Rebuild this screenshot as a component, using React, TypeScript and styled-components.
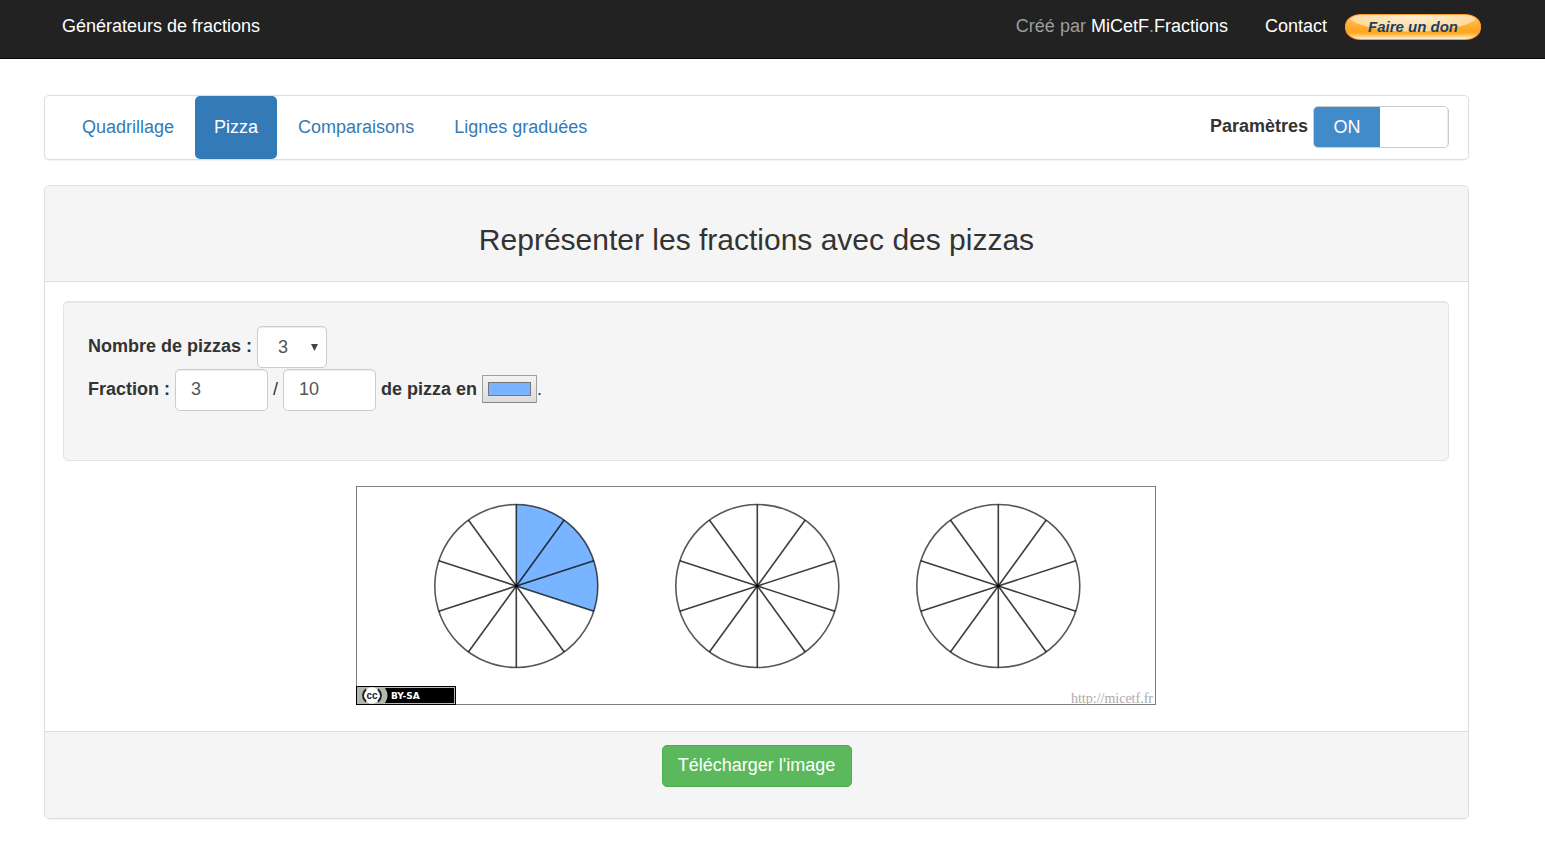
import React, { useState } from "react";
import styled, { createGlobalStyle } from "styled-components";

const GlobalStyle = createGlobalStyle`
  *, *::before, *::after { box-sizing: border-box; }
  body {
    margin: 0;
    background: #fff;
    color: #333;
    font-family: "Liberation Sans", Arial, Helvetica, sans-serif;
    font-size: 18px;
    line-height: 26px;
  }
  button, input, select { font: inherit; margin: 0; }
`;

const Header = styled.header`
  display: flex;
  justify-content: space-between;
  align-items: flex-start;
  padding: 13px 64px 18px 62px;
  background: #222;
  border-bottom: 1px solid #080808;
`;

const HeaderSide = styled.div`
  display: flex;
  align-items: flex-start;
`;

const HeaderLink = styled.a`
  display: inline-block;
  color: #fff;
  text-decoration: none;
`;

const Credit = styled.span`
  margin-right: 37px;
  color: #9d9d9d;
`;

const DonateButton = styled.button`
  width: 136px;
  height: 26px;
  margin: 1px 0 0 18px;
  padding: 0;
  border: 1px solid #ff9933;
  border-radius: 16px / 12px;
  background:
    radial-gradient(ellipse 66px 17px at 50% 0, rgba(255, 246, 228, 0.9) 0, rgba(255, 222, 165, 0.9) 96%, transparent 100%),
    linear-gradient(#ffc46a 0, #ffa822 60%, #ffa822 74%, #ffc86e 86%, #fff0d4 100%);
  color: #1c3f66;
  font-size: 15px;
  font-style: italic;
  font-weight: bold;
  line-height: 24px;
`;

const Page = styled.main`
  display: flex;
  flex-direction: column;
  gap: 25px;
  padding: 36px 76px 48px 44px;
`;

const Panel = styled.section`
  border: 1px solid #ddd;
  border-radius: 5px;
  background: #fff;
  box-shadow: 0 1px 1px rgba(0, 0, 0, 0.05);
`;

const NavPanel = styled(Panel)`
  display: flex;
  justify-content: space-between;
  padding: 0 19px 0 18px;
`;

const Tabs = styled.nav`
  display: flex;
  gap: 2px;
`;

const Tab = styled.a<{ $active?: boolean }>`
  padding: 18px 19px 19px;
  border-radius: 5px;
  background: ${(p) => (p.$active ? "#337ab7" : "transparent")};
  color: ${(p) => (p.$active ? "#fff" : "#337ab7")};
  text-decoration: none;
`;

const Setting = styled.label`
  display: flex;
  align-items: flex-start;
  gap: 5px;
  padding-top: 10px;
  font-weight: bold;
`;

const SettingName = styled.span`
  padding-top: 7px;
`;

const HiddenCheckbox = styled.input`
  position: absolute;
  opacity: 0;
  pointer-events: none;
`;

const Switch = styled.span<{ $on: boolean }>`
  display: flex;
  flex-direction: ${(p) => (p.$on ? "row" : "row-reverse")};
  width: 136px;
  height: 42px;
  overflow: hidden;
  border: 1px solid #ccc;
  border-radius: 5px;
  background: #eee;
  font-weight: normal;
  line-height: 40px;
  text-align: center;
`;

const SwitchState = styled.span<{ $on: boolean }>`
  width: 66px;
  background: ${(p) => (p.$on ? "#428bca" : "#eee")};
  color: ${(p) => (p.$on ? "#fff" : "#333")};
`;

const SwitchHandle = styled.span`
  width: 67px;
  background: #fff;
`;

const PanelHeading = styled.header`
  padding: 36px 18px 23px;
  border-bottom: 1px solid #ddd;
  border-radius: 4px 4px 0 0;
  background: #f5f5f5;
  text-align: center;
`;

const Title = styled.h1`
  margin: 0;
  font-size: 30px;
  font-weight: normal;
  line-height: 36px;
`;

const PanelBody = styled.div`
  display: flex;
  flex-direction: column;
  gap: 25px;
  padding: 19px 19px 26px 18px;
`;

const Well = styled.form`
  display: flex;
  flex-direction: column;
  gap: 1px;
  min-height: 160px;
  padding: 24px;
  border: 1px solid #e3e3e3;
  border-radius: 5px;
  background: #f5f5f5;
  box-shadow: inset 0 1px 1px rgba(0, 0, 0, 0.05);
`;

const FormRow = styled.div`
  display: flex;
  align-items: center;
  gap: 5px;
  line-height: 40px;
`;

const FieldLabel = styled.label`
  padding-bottom: 2px;
  font-weight: bold;
`;

const Slash = styled.span`
  padding-bottom: 2px;
`;

const Field = styled.input`
  width: 93px;
  height: 42px;
  padding: 0 15px 2px;
  border: 1px solid #ccc;
  border-radius: 5px;
  background: #fff;
  box-shadow: inset 0 1px 1px rgba(0, 0, 0, 0.075);
  color: #555;
`;

const SelectWrap = styled.span`
  position: relative;
  display: flex;
`;

const Select = styled.select`
  width: 70px;
  height: 42px;
  padding: 0 20px 3px;
  appearance: none;
  border: 1px solid #ccc;
  border-radius: 5px;
  background: #fff;
  box-shadow: inset 0 1px 1px rgba(0, 0, 0, 0.075);
  color: #555;
`;

const SelectArrow = styled.svg`
  position: absolute;
  top: 18px;
  right: 9px;
  pointer-events: none;
`;

const ColorGroup = styled.span`
  display: flex;
  align-items: center;
  padding-bottom: 2px;
`;

const ColorInput = styled.input`
  width: 55px;
  height: 28px;
  padding: 0 5px;
  appearance: none;
  border: 1px solid #a0a0a0;
  border-bottom-color: #888;
  border-radius: 1px;
  background: linear-gradient(#f3f3f3, #dcdcdc);

  &::-webkit-color-swatch-wrapper { padding: 6px 0; }
  &::-webkit-color-swatch { border: 1px solid #777; border-radius: 0; }
`;

const Drawing = styled.svg`
  display: block;
  align-self: center;
  width: 800px;
  max-width: 100%;
  height: auto;
`;

const PanelFooter = styled.footer`
  display: flex;
  justify-content: center;
  padding: 13px 18px 31px;
  border-top: 1px solid #ddd;
  border-radius: 0 0 4px 4px;
  background: #f5f5f5;
`;

const DownloadButton = styled.button`
  min-width: 190px;
  height: 42px;
  padding: 0 15px 2px;
  border: 1px solid #4cae4c;
  border-radius: 5px;
  background: #5cb85c;
  color: #fff;
`;

const RADIUS = 81.5;

function Pizza({ cx, cy, parts, filled, color }: {
  cx: number; cy: number; parts: number; filled: number; color: string;
}) {
  const angles = Array.from({ length: parts }, (_, i) => (i * 2 * Math.PI) / parts);
  const point = (t: number) => `${cx + RADIUS * Math.sin(t)} ${cy - RADIUS * Math.cos(t)}`;
  return (
    <g strokeWidth="1.600">
      {angles.map((a, i) => (
        <path
          key={i}
          d={`M${cx} ${cy}L${point(a)}A${RADIUS} ${RADIUS} 0 0 1 ${point(a + (2 * Math.PI) / parts)}Z`}
          fill={i < filled ? color : "#fff"}
        />
      ))}
      <circle cx={cx} cy={cy} r={RADIUS} fill="none" stroke="#000" strokeOpacity="0.66" />
      {angles.map((a, i) => (
        <path key={i} d={`M${cx} ${cy}L${point(a)}`} stroke="#000" strokeOpacity="0.76" />
      ))}
    </g>
  );
}

function LicenseBadge() {
  return (
    <g transform="translate(0 200)">
      <rect width="100" height="19" fill="#000" />
      <rect x="1.5" y="1.5" width="97" height="16" fill="#000" stroke="#b2b8ae" />
      <path d="M2 2H29Q34 9.500 29 17H2Z" fill="#b2b8ae" />
      <circle cx="16" cy="9.500" r="8.200" fill="#fff" />
      <path d="M10 3.200Q4 9.500 10 15.800M22 3.200Q28 9.500 22 15.800" fill="none" stroke="#222" strokeWidth="2" />
      <text x="16" y="13" textAnchor="middle" fontFamily="Liberation Sans, sans-serif" fontWeight="bold" fontSize="10" fill="#222">cc</text>
      <text x="35" y="13" fontFamily="DejaVu Sans, sans-serif" fontWeight="bold" fontSize="9" fill="#fff">
        BY-SA
      </text>
    </g>
  );
}

export default function App() {
  const [settings, setSettings] = useState(true);
  const [count, setCount] = useState(3);
  const [numerator, setNumerator] = useState("3");
  const [denominator, setDenominator] = useState("10");
  const [color, setColor] = useState("#78b4ff");

  const parts = Math.max(2, Number(denominator) || 2);
  const total = Number(numerator) || 0;

  return (
    <>
      <GlobalStyle />
      <Header>
        <HeaderLink href="#">Générateurs de fractions</HeaderLink>
        <HeaderSide>
          <Credit>
            Créé par <HeaderLink href="#">MiCetF</HeaderLink>.<HeaderLink href="#">Fractions</HeaderLink>
          </Credit>
          <HeaderLink href="#">Contact</HeaderLink>
          <DonateButton type="button">Faire un don</DonateButton>
        </HeaderSide>
      </Header>
      <Page>
        <NavPanel>
          <Tabs>
            <Tab href="#">Quadrillage</Tab>
            <Tab href="#" $active aria-current="page">Pizza</Tab>
            <Tab href="#">Comparaisons</Tab>
            <Tab href="#">Lignes graduées</Tab>
          </Tabs>
          <Setting>
            <SettingName>Paramètres</SettingName>
            <HiddenCheckbox type="checkbox" checked={settings} onChange={(e) => setSettings(e.target.checked)} />
            <Switch $on={settings}>
              <SwitchState $on={settings}>{settings ? "ON" : "OFF"}</SwitchState>
              <SwitchHandle />
            </Switch>
          </Setting>
        </NavPanel>
        <Panel>
          <PanelHeading>
            <Title>Représenter les fractions avec des pizzas</Title>
          </PanelHeading>
          <PanelBody>
            {settings && (
              <Well>
                <FormRow>
                  <FieldLabel htmlFor="count">Nombre de pizzas :</FieldLabel>
                  <SelectWrap>
                    <Select id="count" value={count} onChange={(e) => setCount(Number(e.target.value))}>
                      <option>1</option>
                      <option>2</option>
                      <option>3</option>
                    </Select>
                    <SelectArrow width="7" height="7" viewBox="0 0 7 7" aria-hidden="true">
                      <path d="M0 0H7L3.500 7Z" fill="#444" />
                    </SelectArrow>
                  </SelectWrap>
                </FormRow>
                <FormRow>
                  <FieldLabel htmlFor="numerator">Fraction :</FieldLabel>
                  <Field id="numerator" value={numerator} onChange={(e) => setNumerator(e.target.value)} />
                  <Slash>/</Slash>
                  <Field aria-label="Dénominateur" value={denominator} onChange={(e) => setDenominator(e.target.value)} />
                  <FieldLabel htmlFor="color">de pizza en</FieldLabel>
                  <ColorGroup>
                    <ColorInput id="color" type="color" value={color} onChange={(e) => setColor(e.target.value)} />
                    <span>.</span>
                  </ColorGroup>
                </FormRow>
              </Well>
            )}
            <Drawing viewBox="0 0 800 219" role="img" aria-label="Pizzas">
              <rect x="0.500" y="0.500" width="799" height="218" fill="#fff" stroke="#808080" />
              {Array.from({ length: count }, (_, i) => (
                <Pizza
                  key={i}
                  cx={160.3 + i * 241}
                  cy={100}
                  parts={parts}
                  filled={Math.min(parts, Math.max(0, total - i * parts))}
                  color={color}
                />
              ))}
              <LicenseBadge />
              <text x="797" y="217" textAnchor="end" fontFamily="Liberation Serif, serif" fontSize="14" fill="#aaa">
                http://micetf.fr
              </text>
            </Drawing>
          </PanelBody>
          <PanelFooter>
            <DownloadButton type="button">Télécharger l'image</DownloadButton>
          </PanelFooter>
        </Panel>
      </Page>
    </>
  );
}
